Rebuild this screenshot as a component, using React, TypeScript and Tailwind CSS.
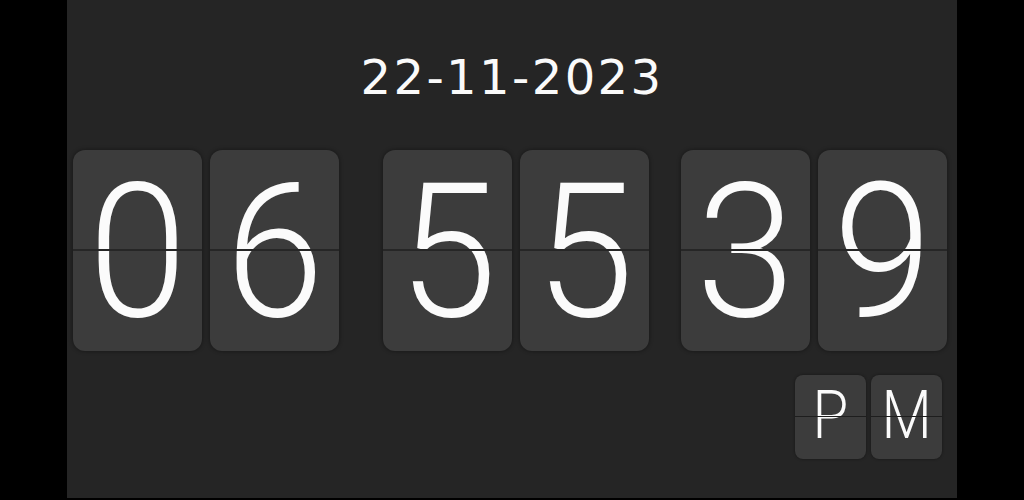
import React from "react";

const digitFont = { fontFamily: 'Roboto, "Liberation Sans", Arial, sans-serif' };

// flip card: one digit split across the middle
function FlipCard({ ch, big = true }: { ch: string; big?: boolean }) {
  return (
    <div
      className={
        big
          ? "relative w-[129px] h-[201px] rounded-[12px] bg-[#3c3c3c] shadow-[0_0_4px_rgba(0,0,0,0.45)] flex justify-center"
          : "relative w-[71px] h-[84px] rounded-[8px] bg-[#3c3c3c] shadow-[0_0_3px_rgba(0,0,0,0.45)] flex justify-center"
      }
    >
      <span
        className={
          big
            ? "text-[178px] leading-[201px] font-light text-[#fbfbfb] scale-y-[1.05] translate-y-[2px]"
            : "text-[66px] leading-[84px] font-light text-[#fbfbfb] scale-x-[0.88] -translate-y-[1px]"
        }
        style={digitFont}
      >
        {ch}
      </span>
      <div
        className={
          big
            ? "absolute left-0 right-0 top-[99px] h-[2px] bg-[#262626]"
            : "absolute left-0 right-0 top-[41px] h-px bg-[#1e1e1e]"
        }
      />
    </div>
  );
}

function Pair({ value }: { value: string }) {
  return (
    <div className="flex gap-[8px]">
      <FlipCard ch={value[0]} />
      <FlipCard ch={value[1]} />
    </div>
  );
}

export default function App() {
  return (
    <div className="w-[1024px] h-[500px] bg-black flex justify-center">
      <div className="w-[890px] h-[498px] bg-[#252525] flex flex-col">
        {/* DATE */}
        <div
          className="pt-[49px] text-center text-[48px] leading-[56px] tracking-[2.4px] text-[#fafafa]"
          style={{ fontFamily: '"DejaVu Sans", Verdana, sans-serif' }}
        >
          22-11-2023
        </div>

        {/* TIME */}
        <div className="flex mt-[45px] pl-[6px]">
          <Pair value="06" />
          <div className="ml-[44px]">
            <Pair value="55" />
          </div>
          <div className="ml-[32px]">
            <Pair value="39" />
          </div>
        </div>

        {/* AM / PM */}
        <div className="flex justify-end gap-[5px] mt-[24px] pr-[15px]">
          <FlipCard ch="P" big={false} />
          <FlipCard ch="M" big={false} />
        </div>
      </div>
    </div>
  );
}
